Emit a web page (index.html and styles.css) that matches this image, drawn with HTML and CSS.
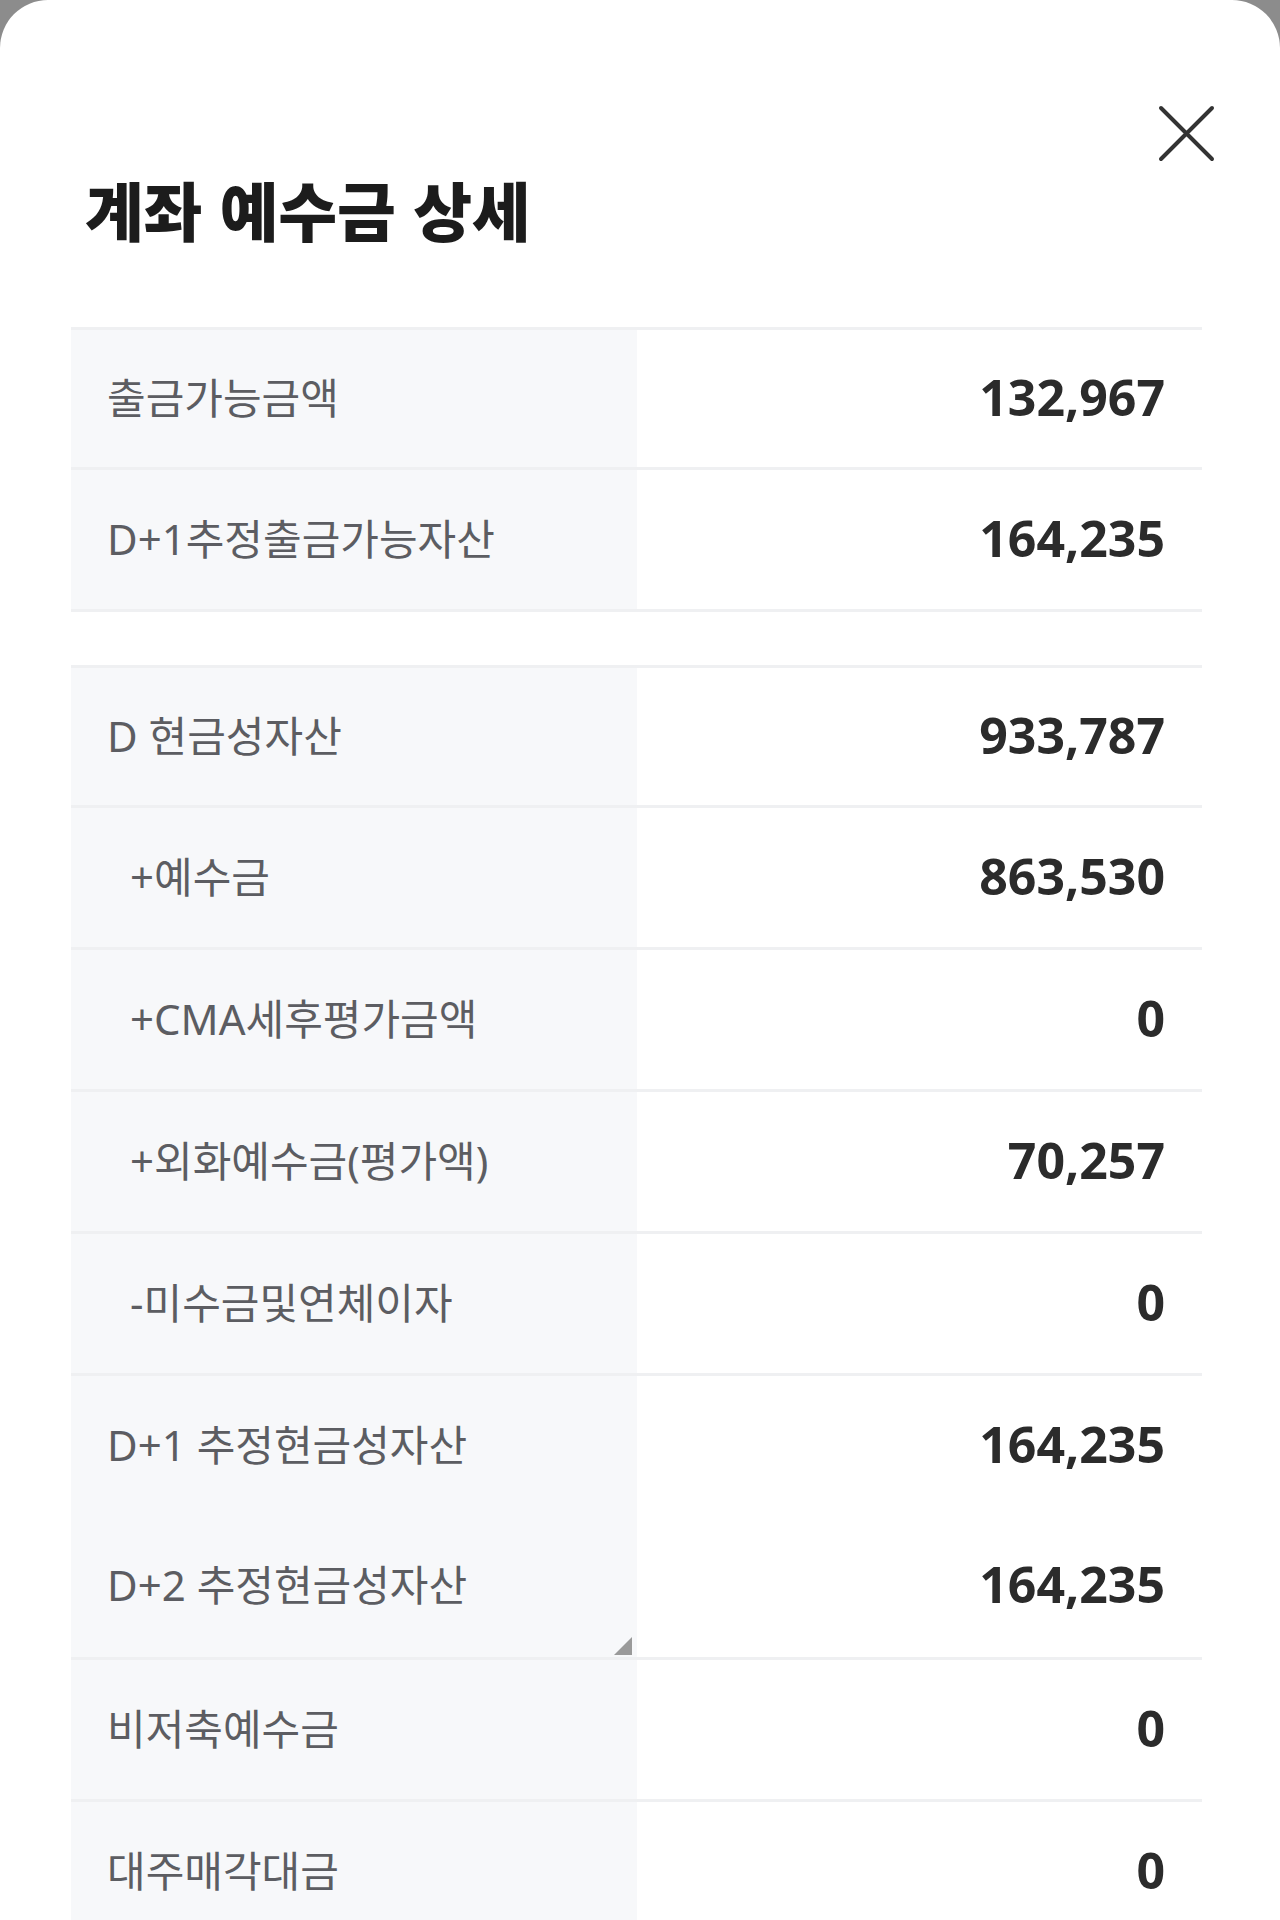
FILE: index.html
```html
<!DOCTYPE html>
<html lang="ko">
<head>
<meta charset="utf-8">
<title>계좌 예수금 상세</title>
<link rel="stylesheet" href="styles.css">
</head>
<body>
<div class="sheet">
  <header class="sheet-head">
    <div class="head-top">
      <button class="close" type="button" aria-label="닫기">
        <svg width="57" height="57" viewBox="0 0 57 57" aria-hidden="true">
          <path d="M3 3 L54 54 M54 3 L3 54" stroke="#333333" stroke-width="4" stroke-linecap="round" fill="none"/>
        </svg>
      </button>
    </div>
    <h1 class="title">계좌 예수금 상세</h1>
  </header>

  <section class="group group-first">
    <div class="row"><div class="label">출금가능금액</div><div class="value">132,967</div></div>
    <div class="row"><div class="label">D+1추정출금가능자산</div><div class="value">164,235</div></div>
  </section>

  <section class="group group-second">
    <div class="row"><div class="label">D 현금성자산</div><div class="value">933,787</div></div>
    <div class="row"><div class="label sub">+예수금</div><div class="value">863,530</div></div>
    <div class="row"><div class="label sub">+CMA세후평가금액</div><div class="value">0</div></div>
    <div class="row"><div class="label sub">+외화예수금(평가액)</div><div class="value">70,257</div></div>
    <div class="row"><div class="label sub">-미수금및연체이자</div><div class="value">0</div></div>
    <div class="row"><div class="label">D+1 추정현금성자산</div><div class="value">164,235</div></div>
    <div class="row row-joined"><div class="label has-corner">D+2 추정현금성자산<span class="corner"></span></div><div class="value">164,235</div></div>
    <div class="row"><div class="label">비저축예수금</div><div class="value">0</div></div>
    <div class="row"><div class="label">대주매각대금</div><div class="value">0</div></div>
  </section>
</div>
</body>
</html>
```
FILE: styles.css
```css
html, body {
  margin: 0;
  padding: 0;
}

body {
  background: #8c8c8c;
  font-family: "Noto Sans", "Noto Sans CJK KR", sans-serif;
}

.sheet {
  box-sizing: border-box;
  height: 1920px;
  overflow: hidden;
  background: #ffffff;
  border-radius: 48px 48px 0 0;
  padding: 105px 78px 0 71px;
}

.head-top {
  display: flex;
  justify-content: flex-end;
  margin-right: -13px;
}

.close {
  display: block;
  width: 57px;
  height: 57px;
  padding: 0;
  border: 0;
  background: none;
  cursor: pointer;
}

.close svg {
  display: block;
}

.title {
  margin: 14px 0 0 14px;
  font-family: "Noto Sans CJK KR", sans-serif;
  font-weight: 900;
  font-size: 64px;
  line-height: 64px;
  letter-spacing: -0.3px;
  color: #1c1c1c;
}

.group {
  border-bottom: 3px solid #eff0f2;
}

.group-first {
  margin-top: 87px;
}

.group-second {
  margin-top: 53px;
}

.row {
  display: grid;
  grid-template-columns: 1fr 1fr;
  height: 139px;
  border-top: 3px solid #eff0f2;
}

.row:first-child {
  height: 137px;
}

.row-joined {
  border-top: 0;
  height: 142px;
}

.label {
  box-sizing: border-box;
  display: flex;
  align-items: center;
  background: #f7f8fa;
  padding: 0 0 7px 36px;
  font-size: 42px;
  letter-spacing: 0;
  color: #5c5d62;
  white-space: nowrap;
}

.label.sub {
  padding-left: 59px;
}

.has-corner {
  position: relative;
}

.corner {
  position: absolute;
  right: 5px;
  bottom: 2px;
  width: 0;
  height: 0;
  border-style: solid;
  border-width: 0 0 18px 18px;
  border-color: transparent transparent #9a9a9a transparent;
}

.value {
  box-sizing: border-box;
  display: flex;
  align-items: center;
  justify-content: flex-end;
  padding: 0 37px 4px 0;
  font-family: "Open Sans", sans-serif;
  font-weight: 700;
  font-size: 50px;
  letter-spacing: 0;
  color: #2b2b2b;
}
```
